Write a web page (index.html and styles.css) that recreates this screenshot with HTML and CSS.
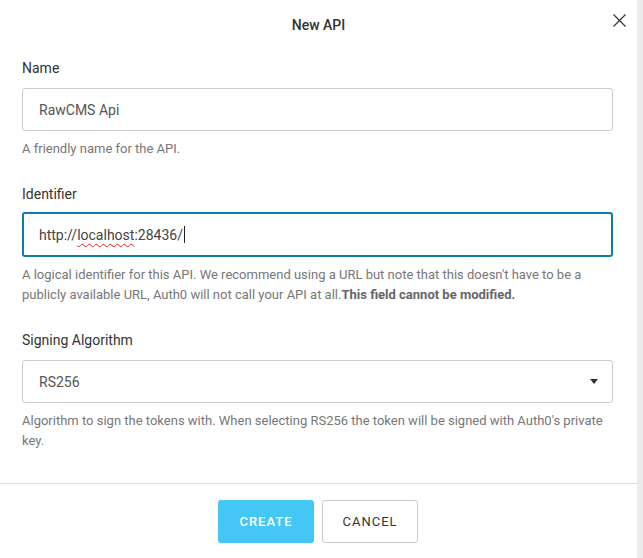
FILE: index.html
```html
<!DOCTYPE html>
<html>
<head>
<meta charset="utf-8">
<link rel="stylesheet" href="styles.css">
</head>
<body>
<div class="modal">
  <div class="header">
    <div class="title">New API</div>
    <button class="close" aria-label="Close">
      <svg width="13" height="13" viewBox="0 0 13 13"><path d="M0.5 0.5 L12.5 12.5 M12.5 0.5 L0.5 12.5" stroke="#333" stroke-width="1.2" fill="none"/></svg>
    </button>
  </div>
  <div class="body">
    <div class="field">
      <div class="label">Name</div>
      <div class="input">RawCMS Api</div>
      <div class="help">A friendly name for the API.</div>
    </div>
    <div class="field">
      <div class="label">Identifier</div>
      <div class="input focused">http://<span class="spell">localhost</span>:28436/<span class="caret"></span></div>
      <div class="help">A logical identifier for this API. We recommend using a URL but note that this doesn't have to be a publicly available URL, Auth0 will not call your API at all.<b>This field cannot be modified.</b></div>
    </div>
    <div class="field">
      <div class="label">Signing Algorithm</div>
      <div class="input select"><span>RS256</span><span class="arrow"></span></div>
      <div class="help">Algorithm to sign the tokens with. When selecting RS256 the token will be signed with Auth0's private key.</div>
    </div>
  </div>
  <div class="footer">
    <button class="btn primary">CREATE</button>
    <button class="btn secondary">CANCEL</button>
  </div>
</div>
</body>
</html>
```

FILE: styles.css
```css
html, body {
  margin: 0;
  height: 100%;
}
body {
  background: #ebebeb;
  font-family: Roboto, "Liberation Sans", Arial, sans-serif;
  color: #333;
}
.modal {
  width: 637px;
  height: 558px;
  background: #fff;
}
.header {
  position: relative;
  height: 50px;
  display: flex;
  align-items: center;
  justify-content: center;
}
.title {
  font-size: 14px;
  font-weight: 500;
  color: #333;
}
.close {
  position: absolute;
  left: 613px;
  top: 14px;
  width: 13px;
  height: 13px;
  padding: 0;
  border: 0;
  background: none;
  display: block;
}
.close svg { display: block; }
.body {
  padding: 8px 24px 32px 22px;
  display: flex;
  flex-direction: column;
  gap: 25px;
}
.field {
  display: flex;
  flex-direction: column;
}
.label {
  font-size: 14px;
  line-height: 20px;
  color: #333;
  margin-bottom: 10px;
}
.input {
  box-sizing: border-box;
  height: 43px;
  border: 1px solid #ccc;
  border-radius: 3px;
  padding: 0 16px;
  display: flex;
  align-items: center;
  font-size: 14px;
  color: #555;
}
.input.focused {
  height: 45px;
  border: 2px solid #0c7fa8;
  padding-left: 15px;
  margin-top: -2px;
  color: #444;
}
.spell {
  text-decoration: underline wavy #e02020;
  text-decoration-thickness: 1px;
  text-underline-offset: 3px;
}
.caret {
  display: inline-block;
  width: 1px;
  height: 17px;
  background: #222;
  margin-left: 1px;
}
.select {
  justify-content: space-between;
  padding-right: 14px;
}
.arrow {
  width: 0;
  height: 0;
  border-left: 4.5px solid transparent;
  border-right: 4.5px solid transparent;
  border-top: 5px solid #333;
}
.help {
  margin-top: 8px;
  font-size: 13px;
  line-height: 20px;
  color: #777;
}
.help b {
  font-weight: 700;
  color: #666;
}
.footer {
  border-top: 1px solid #ddd;
  padding: 16px 1px 0 0;
  display: flex;
  justify-content: center;
  gap: 8px;
}
.btn {
  box-sizing: border-box;
  width: 96px;
  height: 43px;
  border-radius: 3px;
  font-family: Roboto, "Liberation Sans", Arial, sans-serif;
  font-size: 13px;
  letter-spacing: 1px;
  padding: 0;
}
.primary {
  background: #44c7f4;
  border: 0;
  color: #fff;
  font-weight: 500;
}
.secondary {
  background: #fff;
  border: 1px solid #ccc;
  color: #333;
  font-weight: 400;
}
```
